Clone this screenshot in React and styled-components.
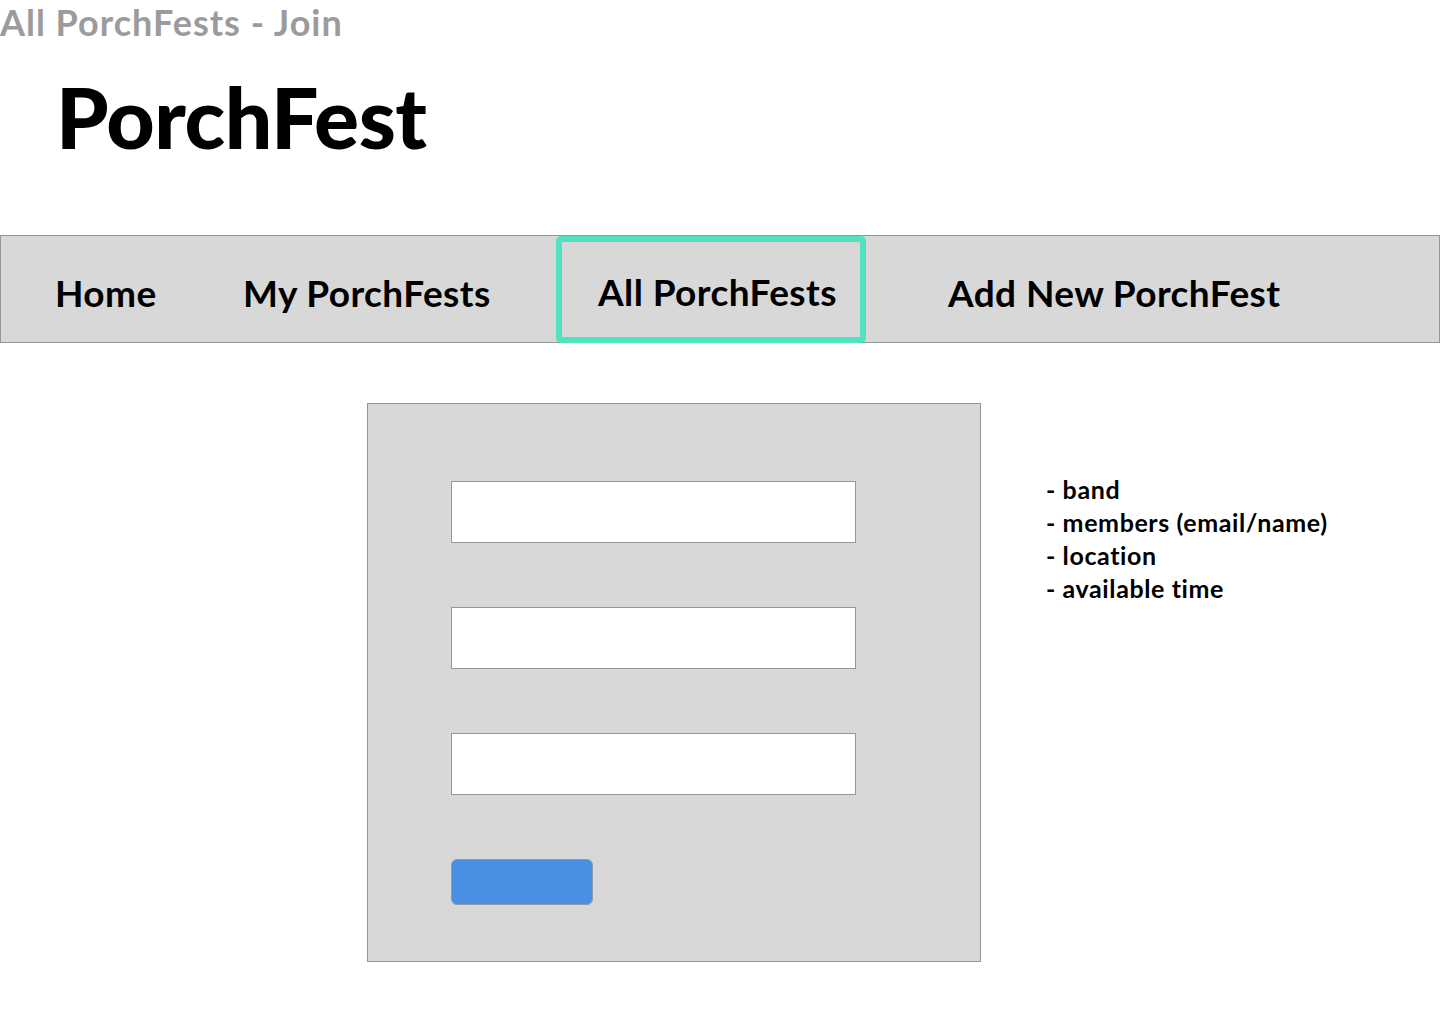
import styled, { createGlobalStyle } from "styled-components";

const GlobalStyle = createGlobalStyle`
  body {
    margin: 0;
    background: #ffffff;
    font-family: Lato, "Open Sans", sans-serif;
    color: #000000;
  }
`;

const Page = styled.div`
  width: 1440px;
  min-height: 1024px;
`;

const PageLabel = styled.div`
  height: 45px;
  font-size: 36px;
  font-weight: 700;
  line-height: 44px;
  letter-spacing: 1px;
  color: #9b9b9b;
`;

const Brand = styled.h1`
  margin: 0;
  padding-left: 56px;
  height: 190px;
  font-size: 84px;
  font-weight: 900;
  line-height: 144px;
  letter-spacing: -0.5px;
`;

const Nav = styled.nav`
  display: flex;
  align-items: stretch;
  height: 108px;
  box-sizing: border-box;
  padding-left: 54px;
  background: #d8d8d8;
  border: 1px solid #979797;
`;

const NavItem = styled.a`
  display: flex;
  align-items: center;
  box-sizing: border-box;
  width: ${(p) => p.$width}px;
  margin-left: ${(p) => p.$gap || 0}px;
  padding-top: 6px;
  font-size: 37px;
  font-weight: 700;
  letter-spacing: 0.4px;
  color: #000000;
  text-decoration: none;
  white-space: nowrap;

  ${(p) =>
    p.$active &&
    `
    padding-left: 36px;
    border: 6px solid #50e3c2;
    border-radius: 5px;
    margin-bottom: -1px;
    padding-top: 4px;
  `}
`;

const Main = styled.main`
  display: flex;
  align-items: flex-start;
  padding: 60px 0 0 367px;
  gap: 65px;
`;

const FormPanel = styled.form`
  display: flex;
  flex-direction: column;
  align-items: flex-start;
  gap: 64px;
  box-sizing: border-box;
  width: 614px;
  height: 559px;
  padding: 77px 0 0 83px;
  background: #d8d8d8;
  border: 1px solid #979797;
`;

const Field = styled.input`
  box-sizing: border-box;
  width: 405px;
  height: 62px;
  margin: 0;
  background: #ffffff;
  border: 1px solid #979797;
`;

const Submit = styled.button`
  box-sizing: border-box;
  width: 142px;
  height: 46px;
  background: #4a90e2;
  border: 1px solid #8d9aa8;
  border-radius: 6px;
`;

const Notes = styled.ul`
  list-style: none;
  margin: 0;
  padding: 70px 0 0;
`;

const Note = styled.li`
  font-size: 25px;
  font-weight: 700;
  line-height: 33px;
  letter-spacing: 0.6px;
`;

const navItems = [
  { label: "Home", width: 188 },
  { label: "My PorchFests", width: 313 },
  { label: "All PorchFests", width: 310, active: true },
  { label: "Add New PorchFest", width: 420, gap: 82 },
];

const notes = ["band", "members (email/name)", "location", "available time"];

export default function App() {
  return (
    <Page>
      <GlobalStyle />
      <PageLabel>All PorchFests - Join</PageLabel>
      <Brand>PorchFest</Brand>
      <Nav>
        {navItems.map((item) => (
          <NavItem
            key={item.label}
            href="#"
            $width={item.width}
            $gap={item.gap}
            $active={item.active}
          >
            {item.label}
          </NavItem>
        ))}
      </Nav>
      <Main>
        <FormPanel onSubmit={(e) => e.preventDefault()}>
          <Field type="text" />
          <Field type="text" />
          <Field type="text" />
          <Submit type="submit" />
        </FormPanel>
        <Notes>
          {notes.map((n) => (
            <Note key={n}>- {n}</Note>
          ))}
        </Notes>
      </Main>
    </Page>
  );
}
